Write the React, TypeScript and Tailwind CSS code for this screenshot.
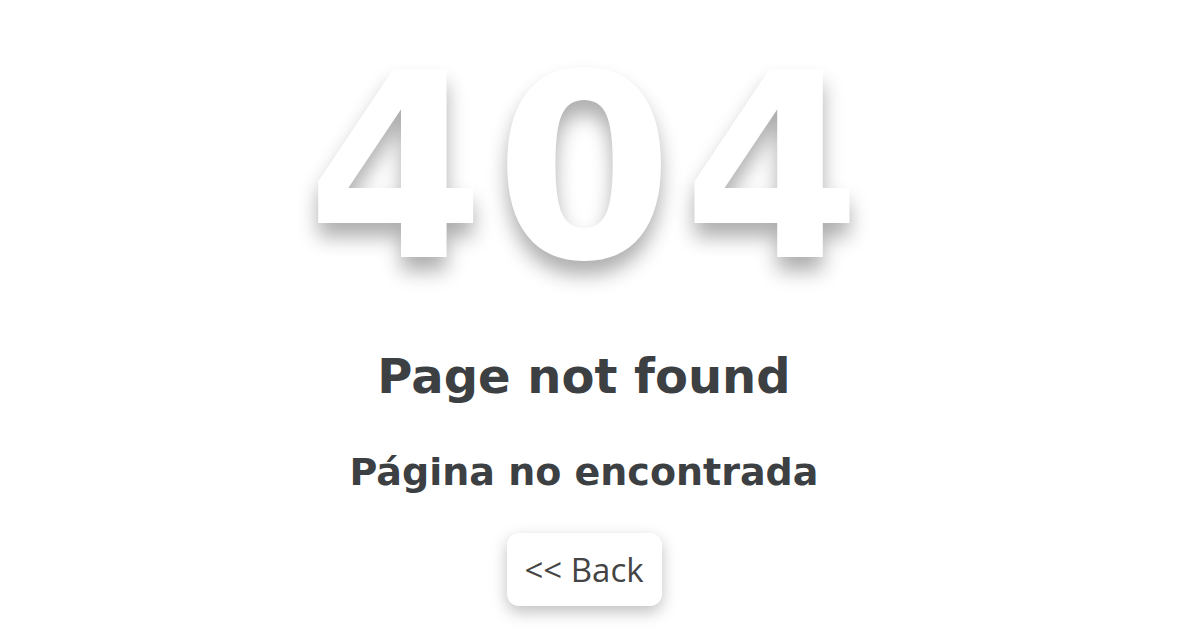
export default function App() {
  return (
    <div className="w-[1200px] h-[630px] bg-white overflow-hidden">
      <div className="w-[1168px] flex flex-col items-center font-['DejaVu_Sans',Verdana,sans-serif] text-[#3c4043]">
        <h1 className="mt-[28px] pl-[10px] text-[256px] leading-[280px] font-bold tracking-[10px] text-white [text-shadow:0_14px_20px_rgba(0,0,0,0.32)]">
          404
        </h1>
        <h2 className="mt-[40px] text-[48px] leading-[56px] font-bold">Page not found</h2>
        <h3 className="mt-[46px] text-[38px] leading-[44px] font-bold">Página no encontrada</h3>
        <button className="mt-[39px] w-[155px] h-[73px] rounded-[12px] bg-white shadow-[0_6px_16px_rgba(0,0,0,0.25)] font-['Open_Sans',sans-serif] text-[33px] text-[#444]">
          &lt;&lt; Back
        </button>
      </div>
    </div>
  )
}
